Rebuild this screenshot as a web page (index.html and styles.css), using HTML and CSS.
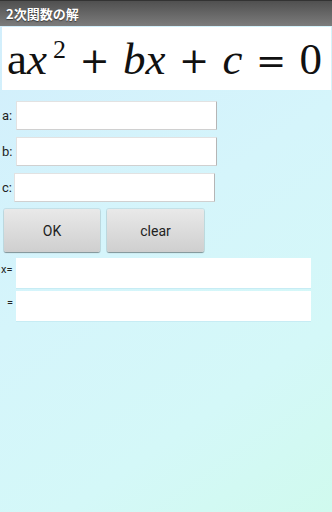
FILE: index.html
```html
<!DOCTYPE html>
<html lang="ja">
<head>
    <meta charset="UTF-8">
    <meta name="viewport" content="width=device-width, initial-scale=1.0">
    <title>2次関数の解</title>
    <link rel="stylesheet" href="styles.css">
</head>
<body>
    <div class="title-bar">2次関数の解</div>

    <div class="formula">
        <span class="term">a<i>x</i><sup>2</sup></span>
        <span class="op">+</span>
        <span class="term"><i>bx</i></span>
        <span class="op">+</span>
        <span class="term"><i>c</i></span>
        <span class="op">=</span>
        <span class="term">0</span>
    </div>

    <div class="inputs">
        <div class="field-row">
            <label for="coef-a">a:</label>
            <input type="text" id="coef-a">
        </div>
        <div class="field-row">
            <label for="coef-b">b:</label>
            <input type="text" id="coef-b">
        </div>
        <div class="field-row row-c">
            <label for="coef-c">c:</label>
            <input type="text" id="coef-c">
        </div>
    </div>

    <div class="buttons">
        <button type="button" class="btn-ok">OK</button>
        <button type="button" class="btn-clear">clear</button>
    </div>

    <div class="results">
        <div class="result-row">
            <span class="result-label">x=</span>
            <div class="result-box"></div>
        </div>
        <div class="result-row">
            <span class="result-label second">=</span>
            <div class="result-box"></div>
        </div>
    </div>
</body>
</html>
```

FILE: styles.css
```css
html, body {
    height: 100%;
}

body {
    margin: 0;
    font-family: Roboto, 'Noto Sans CJK JP', sans-serif;
    color: #222;
    background: linear-gradient(145deg, #d2eefc 0%, #d5f5fb 45%, #d4f8f8 75%, #d0faee 100%);
    overflow: hidden;
}

.title-bar {
    height: 26px;
    box-sizing: border-box;
    padding: 4px 0 0 6px;
    border-top: 1px solid #333;
    background: linear-gradient(#505050, #7c7c7c);
    color: #fff;
    font-family: 'Noto Sans CJK JP', sans-serif;
    font-weight: bold;
    font-size: 13px;
    line-height: 17px;
    text-shadow: 0 1px 1px rgba(0, 0, 0, 0.5);
}

.formula {
    margin: 1px 1px 0 2px;
    height: 63px;
    background: #fff;
    display: flex;
    align-items: center;
    justify-content: space-between;
    padding: 2px 9px 0 5px;
    box-sizing: border-box;
    font-family: 'Liberation Serif', serif;
    font-size: 45px;
    line-height: 1;
    color: #111;
}

.formula .term {
    display: flex;
    align-items: center;
}

.formula sup {
    font-size: 26px;
    align-self: flex-start;
    margin-top: 0;
    margin-left: 6px;
}

.formula .op {
    font-family: 'DejaVu Serif', serif;
    font-size: 36px;
    margin-top: 2px;
}

.inputs {
    margin-top: 11px;
    display: flex;
    flex-direction: column;
    gap: 7px;
}

.field-row {
    display: flex;
    align-items: center;
    height: 29px;
}

.field-row label {
    width: 14px;
    padding-left: 2px;
    font-size: 13px;
}

.field-row.row-c label {
    width: 12px;
}

.field-row input {
    width: 201px;
    height: 29px;
    box-sizing: border-box;
    border: 1px solid #e2e2e2;
    border-right-color: #b5b5b5;
    border-bottom-color: #d0d0d0;
    border-radius: 1px;
    background: #fff;
    outline: none;
}

.buttons {
    display: flex;
    gap: 7px;
    margin: 7px 0 0 4px;
}

.buttons button {
    width: 96px;
    height: 43px;
    border: none;
    border-radius: 2px;
    background: linear-gradient(#e9e9e9, #cfcfcf);
    box-shadow: 0 1px 1px rgba(0, 0, 0, 0.35), 0 0 0 1px rgba(0, 0, 0, 0.08);
    font-family: Roboto, sans-serif;
    font-size: 14px;
    color: #222;
}

.buttons .btn-clear {
    width: 97px;
}

.results {
    margin-top: 6px;
    display: flex;
    flex-direction: column;
    gap: 3px;
}

.result-row {
    display: flex;
    align-items: flex-start;
}

.result-label {
    width: 15px;
    padding-left: 1px;
    font-size: 11px;
    line-height: 1;
    margin-top: 6px;
}

.result-label.second {
    width: 9px;
    padding-left: 7px;
}

.result-box {
    width: 295px;
    height: 30px;
    background: #fff;
    box-shadow: 0 1px 0 #c7ecf4;
}
```
